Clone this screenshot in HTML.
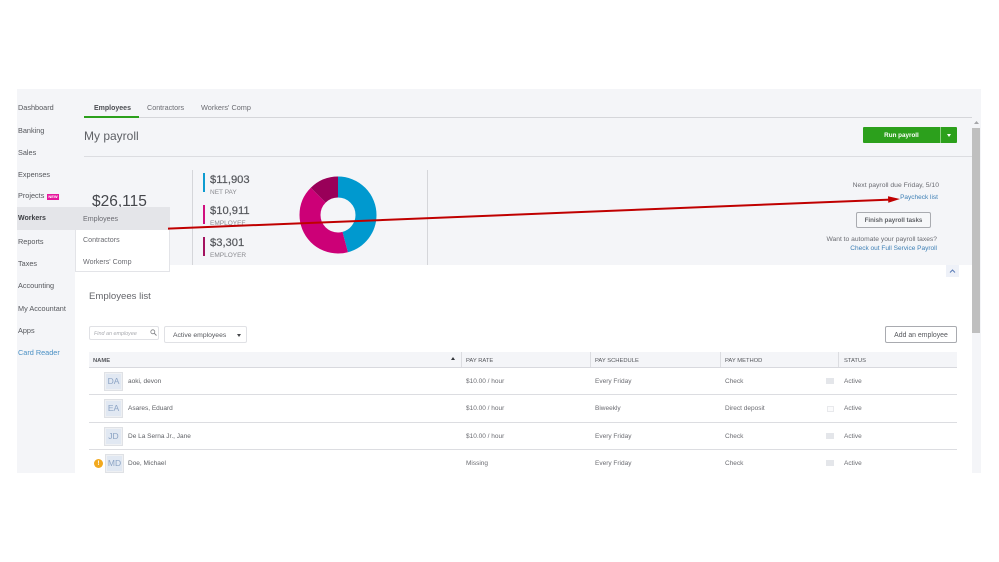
<!DOCTYPE html>
<html><head><meta charset="utf-8">
<style>
html,body{margin:0;padding:0;background:#fff}
body{width:999px;height:562px;overflow:hidden;position:relative;font-family:"Liberation Sans",sans-serif;color:#55575c}
#w{position:absolute;left:0;top:0;width:999px;height:562px;filter:blur(.35px)}
.b{position:absolute;box-sizing:border-box}
.t{position:absolute;white-space:nowrap;line-height:10px;height:10px;font-size:6.5px;color:#6b6c72;margin-top:1px}
.n{font-size:7.3px;color:#55575c;left:18px}
.r{text-align:right}
.h{font-size:5.8px;color:#55575c}
.a{position:absolute;box-sizing:border-box;width:19px;height:19px;background:#e1e8f2;border:2px solid #eef0f3;outline:1px solid #dfe1e5;outline-offset:-1px;color:#8ba3c4;font-size:8.5px;line-height:15px;text-align:center}
.v{font-size:11.2px;color:#55575c;-webkit-text-stroke:.2px #55575c}
</style></head><body>
<div id="w">
<div class="b" style="left:17px;top:89px;width:964px;height:176px;background:#f4f5f8"></div>
<div class="b" style="left:17px;top:265px;width:58px;height:208px;background:#f4f5f8"></div>
<div class="b" style="left:972px;top:128px;width:9px;height:345px;background:#f4f5f8"></div>
<div class="b" style="left:972px;top:128px;width:8px;height:205px;background:#bfbfbf"></div>

<!-- sidebar -->
<span class="t n" style="top:102px">Dashboard</span>
<span class="t n" style="top:125px">Banking</span>
<span class="t n" style="top:147px">Sales</span>
<span class="t n" style="top:169px">Expenses</span>
<span class="t n" style="top:190px">Projects</span>
<div class="b" style="left:47px;top:194px;width:12px;height:6px;background:#e6179d;color:#fff;font-size:4px;font-weight:bold;line-height:6px;text-align:center">NEW</div>

<!-- tabs -->
<span class="t" style="left:94px;top:103px;font-size:7px;font-weight:bold;color:#4b4d52">Employees</span>
<span class="t" style="left:147px;top:102px;font-size:7.2px">Contractors</span>
<span class="t" style="left:201px;top:102px;font-size:7.3px">Workers' Comp</span>
<div class="b" style="left:84px;top:117px;width:888px;height:1px;background:#d5d6da"></div>
<div class="b" style="left:84px;top:116px;width:55px;height:2px;background:#2ca01c"></div>
<span class="t" style="left:84px;top:130px;font-size:12px;color:#5f6166">My payroll</span>
<div class="b" style="left:84px;top:156px;width:888px;height:1px;background:#dcdde1"></div>
<div class="b" style="left:863px;top:127px;width:94px;height:16px;background:#2ca01c;border-radius:1px"></div>
<div class="b" style="left:940px;top:127px;width:1px;height:16px;background:#8fd084"></div>
<span class="t" style="left:863px;top:130px;width:77px;text-align:center;color:#fff;font-weight:bold;font-size:6.3px">Run payroll</span>
<div class="b" style="left:946.5px;top:134px;border-left:2.5px solid transparent;border-right:2.5px solid transparent;border-top:3px solid #fff"></div>

<!-- summary -->
<span class="t" style="left:92px;top:196px;font-size:15.5px;color:#45474c">$26,115</span>
<div class="b" style="left:192px;top:170px;width:1px;height:95px;background:#d5d6da"></div>
<div class="b" style="left:427px;top:170px;width:1px;height:95px;background:#d5d6da"></div>
<div class="b" style="left:203px;top:173px;width:2px;height:19px;background:#0d9bd0"></div>
<div class="b" style="left:203px;top:205px;width:2px;height:19px;background:#d0107f"></div>
<div class="b" style="left:203px;top:237px;width:2px;height:19px;background:#a3125f"></div>
<span class="t v" style="left:210px;top:174px">$11,903</span>
<span class="t" style="left:210px;top:187px;color:#8a8b90">NET PAY</span>
<span class="t v" style="left:210px;top:205px">$10,911</span>
<span class="t" style="left:210px;top:218px;color:#8a8b90">EMPLOYEE</span>
<span class="t v" style="left:210px;top:237px">$3,301</span>
<span class="t" style="left:210px;top:250px;color:#8a8b90">EMPLOYER</span>

<svg class="b" style="left:299px;top:176px" width="78" height="78" viewBox="0 0 78 78">
<g fill="none" stroke-width="21" transform="rotate(-90 39 39)">
<circle cx="39" cy="39" r="28" stroke="#0099cf" pathLength="360" stroke-dasharray="165 360"/>
<circle cx="39" cy="39" r="28" stroke="#cc0077" pathLength="360" stroke-dasharray="150 360" stroke-dashoffset="-165"/>
<circle cx="39" cy="39" r="28" stroke="#990059" pathLength="360" stroke-dasharray="45 360" stroke-dashoffset="-315"/>
</g></svg>

<span class="t r" style="right:60px;top:180px;font-size:6.8px">Next payroll due Friday, 5/10</span>
<span class="t r" style="right:61px;top:192px;color:#3d7fb5">Paycheck list</span>
<div class="b" style="left:856px;top:212px;width:75px;height:16px;border:1px solid #a9abb0;border-radius:2px;background:#f6f7f9"></div>
<span class="t" style="left:856px;top:215px;width:75px;text-align:center;font-weight:bold;font-size:6.2px;color:#5f6166">Finish payroll tasks</span>
<span class="t r" style="right:62px;top:234px;font-size:6.7px">Want to automate your payroll taxes?</span>
<span class="t r" style="right:62px;top:243px;color:#3d7fb5;font-size:6.5px">Check out Full Service Payroll</span>
<div class="b" style="left:946px;top:265px;width:13px;height:12px;background:#eef1f8"></div>
<svg class="b" style="left:949px;top:269px" width="7" height="4"><path d="M1 3.5L3.5 1L6 3.5" fill="none" stroke="#5b7db8" stroke-width="1"/></svg>
<svg class="b" style="left:973px;top:120px" width="7" height="5"><path d="M1 4L3.5 1L6 4Z" fill="#a5a6a9"/></svg>

<!-- list -->
<span class="t" style="left:89px;top:291px;font-size:9.6px;color:#65666b">Employees list</span>
<div class="b" style="left:89px;top:326px;width:70px;height:14px;border:1px solid #e0e1e5;border-radius:2px"></div>
<span class="t" style="left:94px;top:328px;font-size:5.4px;font-style:italic;color:#a9abb0">Find an employee</span>
<svg class="b" style="left:150px;top:329px" width="7" height="7"><circle cx="2.8" cy="2.8" r="2" fill="none" stroke="#7f8185" stroke-width=".8"/><path d="M4.3 4.3L6.5 6.5" stroke="#7f8185" stroke-width=".9"/></svg>
<div class="b" style="left:164px;top:326px;width:83px;height:17px;border:1px solid #e0e1e5;border-radius:2px"></div>
<span class="t" style="left:173px;top:330px;font-size:6.8px;color:#55575c">Active employees</span>
<div class="b" style="left:237px;top:334px;border-left:2.5px solid transparent;border-right:2.5px solid transparent;border-top:3px solid #44464a"></div>
<div class="b" style="left:885px;top:326px;width:72px;height:17px;border:1px solid #a9abb0;border-radius:2px"></div>
<span class="t" style="left:885px;top:330px;width:72px;text-align:center;font-size:6.9px;color:#55575c">Add an employee</span>

<div class="b" style="left:89px;top:352px;width:868px;height:15px;background:#f4f5f8"></div>
<div class="b" style="left:89px;top:367px;width:868px;height:1px;background:#d8d9de"></div>
<div class="b" style="left:89px;top:394px;width:868px;height:1px;background:#dcdde1"></div>
<div class="b" style="left:89px;top:422px;width:868px;height:1px;background:#dcdde1"></div>
<div class="b" style="left:89px;top:449px;width:868px;height:1px;background:#dcdde1"></div>
<div class="b" style="left:461px;top:352px;width:1px;height:15px;background:#dcdde1"></div>
<div class="b" style="left:590px;top:352px;width:1px;height:15px;background:#dcdde1"></div>
<div class="b" style="left:720px;top:352px;width:1px;height:15px;background:#dcdde1"></div>
<div class="b" style="left:838px;top:352px;width:1px;height:15px;background:#dcdde1"></div>
<span class="t h" style="left:93px;top:355px;font-weight:bold">NAME</span>
<div class="b" style="left:451px;top:357px;border-left:2.5px solid transparent;border-right:2.5px solid transparent;border-bottom:3px solid #33353a"></div>
<span class="t h" style="left:466px;top:355px">PAY RATE</span>
<span class="t h" style="left:595px;top:355px">PAY SCHEDULE</span>
<span class="t h" style="left:725px;top:355px">PAY METHOD</span>
<span class="t h" style="left:844px;top:355px">STATUS</span>

<div class="a" style="left:104px;top:372px">DA</div>
<span class="t" style="left:128px;top:376px;color:#5f6166">aoki, devon</span>
<span class="t" style="left:466px;top:376px">$10.00 / hour</span>
<span class="t" style="left:595px;top:376px">Every Friday</span>
<span class="t" style="left:725px;top:376px">Check</span>
<div class="b" style="left:826px;top:378px;width:8px;height:6px;background:#e4e6ea"></div>
<span class="t" style="left:844px;top:376px">Active</span>

<div class="a" style="left:104px;top:399px">EA</div>
<span class="t" style="left:128px;top:403px;color:#5f6166">Asares, Eduard</span>
<span class="t" style="left:466px;top:403px">$10.00 / hour</span>
<span class="t" style="left:595px;top:403px">Biweekly</span>
<span class="t" style="left:725px;top:403px">Direct deposit</span>
<div class="b" style="left:827px;top:406px;width:7px;height:6px;border:1px solid #e8e9ec;background:#fbfbfc"></div>
<span class="t" style="left:844px;top:403px">Active</span>

<div class="a" style="left:104px;top:427px">JD</div>
<span class="t" style="left:128px;top:431px;color:#5f6166">De La Serna Jr., Jane</span>
<span class="t" style="left:466px;top:431px">$10.00 / hour</span>
<span class="t" style="left:595px;top:431px">Every Friday</span>
<span class="t" style="left:725px;top:431px">Check</span>
<div class="b" style="left:826px;top:433px;width:8px;height:6px;background:#e4e6ea"></div>
<span class="t" style="left:844px;top:431px">Active</span>

<div class="b" style="left:94px;top:459px;width:9px;height:9px;border-radius:50%;background:#f2a91e;color:#fff;font-size:6.5px;font-weight:bold;line-height:9px;text-align:center">!</div>
<div class="a" style="left:105px;top:454px">MD</div>
<span class="t" style="left:128px;top:458px;color:#5f6166">Doe, Michael</span>
<span class="t" style="left:466px;top:458px">Missing</span>
<span class="t" style="left:595px;top:458px">Every Friday</span>
<span class="t" style="left:725px;top:458px">Check</span>
<div class="b" style="left:826px;top:460px;width:8px;height:6px;background:#e4e6ea"></div>
<span class="t" style="left:844px;top:458px">Active</span>

<!-- flyout menu -->
<div class="b" style="left:75px;top:207px;width:95px;height:65px;background:#fff;border:1px solid #e3e4e8;border-top:0"></div>
<div class="b" style="left:17px;top:207px;width:153px;height:23px;background:#e4e5e9"></div>
<span class="t n" style="top:213px;font-weight:bold;color:#3c3e43;font-size:7px">Workers</span>
<span class="t" style="left:83px;top:213px;font-size:7.1px">Employees</span>
<span class="t" style="left:83px;top:234px;font-size:7.1px">Contractors</span>
<span class="t" style="left:83px;top:256px;font-size:7.1px">Workers' Comp</span>

<span class="t n" style="top:236px">Reports</span>
<span class="t n" style="top:258px">Taxes</span>
<span class="t n" style="top:280px">Accounting</span>
<span class="t n" style="top:303px">My Accountant</span>
<span class="t n" style="top:325px">Apps</span>
<span class="t n" style="top:347px;color:#4a90c4">Card Reader</span>

<!-- red arrow -->
<svg class="b" style="left:0;top:0" width="999" height="562"><path d="M168 228.6L890 199.6" stroke="#c00000" stroke-width="2" fill="none"/><path d="M900 199L888 196.2L888.3 202.8Z" fill="#c00000"/></svg>
</div>
</body></html>
